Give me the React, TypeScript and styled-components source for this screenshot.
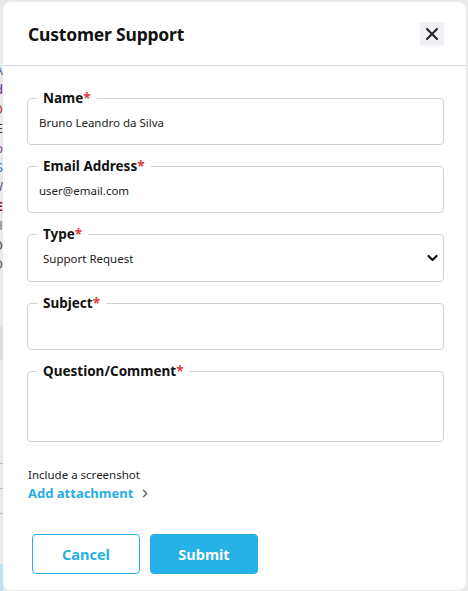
import React from "react";
import styled, { createGlobalStyle } from "styled-components";

const GlobalStyle = createGlobalStyle`
  html, body { margin: 0; padding: 0; }
  body {
    background: #e9e9e9;
    font-family: "Noto Sans", "Open Sans", sans-serif;
    color: #111;
  }
  * { box-sizing: border-box; }
`;

const Page = styled.div`
  display: flex;
  width: 468px;
  height: 591px;
  overflow: hidden;
`;

const Strip = styled.div`
  width: 3px;
  flex: none;
  display: flex;
  flex-direction: column;
  padding-top: 61px;
  overflow: hidden;
`;

const StripGlyph = styled.div<{ $c: string; $b?: boolean }>`
  display: flex;
  justify-content: flex-end;
  width: 3px;
  height: 19.4px;
  font-size: 13px;
  line-height: 19.4px;
  white-space: nowrap;
  color: ${(p) => p.$c};
  font-weight: ${(p) => (p.$b ? 700 : 400)};
`;

const StripBlock = styled.div<{ $h: number; $bg: string; $line?: boolean }>`
  width: 3px;
  flex: none;
  height: ${(p) => p.$h}px;
  background: ${(p) => p.$bg};
  border-bottom: ${(p) => (p.$line ? "1px solid #bdbdbd" : "none")};
`;

const Modal = styled.div`
  margin-top: 2px;
  width: 463px;
  height: 588px;
  background: #fff;
  border-radius: 8px;
  display: flex;
  flex-direction: column;
  flex: none;
`;

const Header = styled.div`
  height: 64px;
  border-bottom: 1px solid #d3d3d8;
  display: flex;
  align-items: center;
  justify-content: space-between;
  padding: 0 22px 0 25px;
`;

const Title = styled.h2`
  margin: 0;
  font-size: 17.5px;
  font-weight: 700;
  color: #111;
  letter-spacing: -0.2px;
`;

const CloseButton = styled.button`
  width: 24px;
  height: 24px;
  border: none;
  padding: 0;
  background: #eef0f4;
  display: flex;
  align-items: center;
  justify-content: center;
  cursor: pointer;
`;

const Body = styled.form`
  display: flex;
  flex-direction: column;
  padding: 24px 22px 0 24px;
`;

const Field = styled.fieldset`
  margin: 0 0 13px;
  padding: 0;
  border: 1px solid #d2d2d2;
  border-radius: 4px;
  min-width: 0;
`;

const Legend = styled.legend`
  margin-left: 9px;
  padding: 0 6px;
  font-size: 13.5px;
  line-height: 16px;
  font-weight: 700;
  color: #111;
`;

const Star = styled.span`
  color: #e23b3b;
`;

const TextInput = styled.input`
  display: block;
  width: 100%;
  height: 32px;
  margin: 0 0 6px;
  padding: 0 11px;
  border: none;
  outline: none;
  background: transparent;
  font-family: inherit;
  font-size: 11.5px;
  color: #222;
  caret-color: #111;
`;

const SelectWrap = styled.div`
  display: flex;
  align-items: center;
  height: 32px;
  margin: 0 0 7px;
  padding: 0 5px 0 15px;
`;

const Select = styled.select`
  flex: 1;
  appearance: none;
  border: none;
  outline: none;
  background: transparent;
  padding: 0;
  font-family: inherit;
  font-size: 11.5px;
  color: #222;
`;

const TextArea = styled.textarea`
  display: block;
  width: 100%;
  height: 62px;
  margin: 0;
  padding: 4px 11px;
  border: none;
  outline: none;
  resize: none;
  background: transparent;
  font-family: inherit;
  font-size: 12px;
`;

const Attach = styled.div`
  display: flex;
  flex-direction: column;
  padding-left: 1px;
  margin-top: 12px;
`;

const Hint = styled.div`
  font-size: 11.5px;
  line-height: 16px;
  color: #222;
`;

const AttachLink = styled.a`
  display: flex;
  align-items: center;
  gap: 9px;
  font-size: 13px;
  line-height: 20px;
  font-weight: 700;
  color: #29aee3;
  text-decoration: none;
  cursor: pointer;
`;

const Actions = styled.div`
  display: flex;
  gap: 10px;
  padding-left: 5px;
  margin-top: 31px;
`;

const Button = styled.button<{ $primary?: boolean }>`
  width: 108px;
  height: 40px;
  border-radius: 4px;
  border: 1px solid #25b0e5;
  background: ${(p) => (p.$primary ? "#25b1e6" : "#fff")};
  color: ${(p) => (p.$primary ? "#fff" : "#25b0e5")};
  font-family: inherit;
  font-size: 14.5px;
  font-weight: 700;
  cursor: pointer;
`;

const stripGlyphs: [string, string, boolean?][] = [
  ["A", "#5b6b8c"],
  ["d", "#6a2a8a"],
  ["O", "#b03030"],
  ["E", "#333"],
  ["o", "#7a4a9a"],
  ["S", "#3a7ab8"],
  ["W", "#6a4a9a"],
  ["E", "#8a1030", true],
  ["H", "#777"],
  ["O", "#444"],
  ["O", "#555"],
];

export default function App() {
  return (
    <>
      <GlobalStyle />
      <Page>
        <Strip>
          {stripGlyphs.map(([g, c, b], i) => (
            <StripGlyph key={i} $c={c} $b={b}>
              {g}
            </StripGlyph>
          ))}
          <StripBlock $h={53} $bg="#e9e9e9" />
          <StripBlock $h={33} $bg="#dcdcdc" />
          <StripBlock $h={104} $bg="#e9e9e9" $line />
          <StripBlock $h={25} $bg="#e9e9e9" $line />
          <StripBlock $h={25} $bg="#e9e9e9" $line />
          <StripBlock $h={50} $bg="#e9e9e9" />
          <StripBlock $h={30} $bg="#bfe0ef" />
        </Strip>
        <Modal>
          <Header>
            <Title>Customer Support</Title>
            <CloseButton type="button" aria-label="Close">
              <svg width="12" height="12" viewBox="0 0 12 12">
                <path d="M1 1L11 11M11 1L1 11" stroke="#222" strokeWidth="2" strokeLinecap="round" />
              </svg>
            </CloseButton>
          </Header>
          <Body onSubmit={(e) => e.preventDefault()}>
            <Field>
              <Legend>
                Name<Star>*</Star>
              </Legend>
              <TextInput defaultValue="Bruno Leandro da Silva" />
            </Field>
            <Field>
              <Legend>
                Email Address<Star>*</Star>
              </Legend>
              <TextInput defaultValue="user@email.com" />
            </Field>
            <Field>
              <Legend>
                Type<Star>*</Star>
              </Legend>
              <SelectWrap>
                <Select defaultValue="support">
                  <option value="support">Support Request</option>
                  <option value="feedback">Feedback</option>
                </Select>
                <svg width="11" height="8" viewBox="0 0 11 8">
                  <path d="M1.5 2L5.5 6L9.5 2" stroke="#111" strokeWidth="2.2" fill="none" strokeLinecap="round" strokeLinejoin="round" />
                </svg>
              </SelectWrap>
            </Field>
            <Field>
              <Legend>
                Subject<Star>*</Star>
              </Legend>
              <TextInput />
            </Field>
            <Field>
              <Legend>
                Question/Comment<Star>*</Star>
              </Legend>
              <TextArea />
            </Field>
            <Attach>
              <Hint>Include a screenshot</Hint>
              <AttachLink>
                Add attachment
                <svg width="6" height="9" viewBox="0 0 6 9">
                  <path d="M1.2 1L4.7 4.5L1.2 8" stroke="#555" strokeWidth="1.2" fill="none" />
                </svg>
              </AttachLink>
            </Attach>
            <Actions>
              <Button type="button">Cancel</Button>
              <Button type="submit" $primary>
                Submit
              </Button>
            </Actions>
          </Body>
        </Modal>
      </Page>
    </>
  );
}
